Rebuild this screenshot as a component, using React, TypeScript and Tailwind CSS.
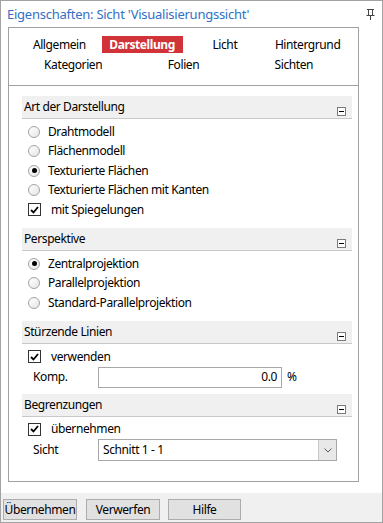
const font = { fontFamily: '"Noto Sans", "Open Sans", sans-serif' };

const Radio = ({ checked, label }: { checked?: boolean; label: string }) => (
  <div className="flex h-[19.5px] items-center pl-[6px]">
    <span className="flex h-[12px] w-[12px] items-center justify-center rounded-full border border-[#a2a2a2] bg-gradient-to-br from-white to-[#e6e6e6]">
      {checked && <span className="h-[5px] w-[5px] rounded-full bg-black" />}
    </span>
    <span className="ml-[8px]">{label}</span>
  </div>
);

const Check = ({ label }: { label: string }) => (
  <div className="flex h-[19.5px] items-center pl-[6px]">
    <span className="flex h-[13px] w-[13px] items-center justify-center border border-[#333] bg-white">
      <svg width="9" height="8" viewBox="0 0 9 8">
        <path d="M1 4 L3.5 6.5 L8 1" fill="none" stroke="#000" strokeWidth="1.8" />
      </svg>
    </span>
    <span className="ml-[10px]">{label}</span>
  </div>
);

const SectionHeader = ({ title }: { title: string }) => (
  <div className="flex h-[23px] items-stretch justify-between border-b border-[#c9c9c9] bg-[#f0f0f0]">
    <span className="flex items-center pl-[2px]">{title}</span>
    <span className="flex items-end pb-[2px] pr-[6px]">
      <span className="flex h-[9px] w-[9px] items-center justify-center border border-[#7a7a7a] bg-white">
        <span className="h-[1px] w-[5px] bg-black" />
      </span>
    </span>
  </div>
);

const PinIcon = () => (
  <svg width="9" height="12" viewBox="0 0 9 12">
    <path d="M1 1.5 H8 M2.5 1.5 V7 M6.5 1.5 V7 M0.5 7.5 H8.5 M4.5 8 V12" fill="none" stroke="#444" strokeWidth="1" />
  </svg>
);

const App = () => {
  return (
    <div
      className="flex h-[523px] w-[383px] flex-col border border-[#a3a3a3] bg-white text-[12px] leading-none tracking-[-0.4px] text-black"
      style={font}
    >
      <div className="flex h-[26px] items-center justify-between pl-[6px] pr-[7px]">
        <span className="text-[13px] tracking-[-0.25px] text-[#3270c4]">Eigenschaften: Sicht 'Visualisierungssicht'</span>
        <PinIcon />
      </div>

      <div className="ml-[7px] flex h-[455px] w-[351px] flex-col border border-[#a0a0a0]">
        <div className="flex h-[58px] flex-col gap-[3px] border-b border-[#a0a0a0] px-[9px] pt-[8px]">
          <div className="grid h-[17px] grid-cols-4 items-center">
            <span className="text-center">Allgemein</span>
            <span className="flex justify-center">
              <span className="flex h-[17px] w-[81px] items-center justify-center bg-[#d13438] font-bold text-white">
                Darstellung
              </span>
            </span>
            <span className="text-center">Licht</span>
            <span className="text-center">Hintergrund</span>
          </div>
          <div className="grid h-[17px] grid-cols-3 items-center">
            <span className="text-center">Kategorien</span>
            <span className="text-center">Folien</span>
            <span className="text-center">Sichten</span>
          </div>
        </div>

        <div className="flex flex-col pl-[13px] pr-[6px] pt-[10px]">
          <SectionHeader title="Art der Darstellung" />
          <div className="pt-[3px] pb-[8.5px]">
            <Radio label="Drahtmodell" />
            <Radio label="Flächenmodell" />
            <Radio checked label="Texturierte Flächen" />
            <Radio label="Texturierte Flächen mit Kanten" />
            <Check label="mit Spiegelungen" />
          </div>

          <SectionHeader title="Perspektive" />
          <div className="pt-[3px] pb-[8.5px]">
            <Radio checked label="Zentralprojektion" />
            <Radio label="Parallelprojektion" />
            <Radio label="Standard-Parallelprojektion" />
          </div>

          <SectionHeader title="Stürzende Linien" />
          <div className="pt-[3px] pb-[6px]">
            <Check label="verwenden" />
            <div className="flex h-[21px] items-center pl-[11px]">
              <span className="w-[65px]">Komp.</span>
              <span className="flex h-[21px] w-[184px] items-center justify-end border border-[#a8a8a8] pr-[4px]">
                0.0
              </span>
              <span className="ml-[5px]">%</span>
            </div>
          </div>

          <SectionHeader title="Begrenzungen" />
          <div className="pt-[3px]">
            <Check label="übernehmen" />
            <div className="flex h-[22px] items-center pl-[11px]">
              <span className="w-[65px]">Sicht</span>
              <span className="flex h-[22px] w-[239px] items-stretch border border-[#a8a8a8]">
                <span className="flex flex-1 items-center pl-[4px]">Schnitt 1 - 1</span>
                <span className="flex w-[18px] items-center justify-center border-l border-[#c8c8c8] bg-[#e8e8e8]">
                  <svg width="8" height="5" viewBox="0 0 8 5">
                    <path d="M0.5 0.5 L4 4 L7.5 0.5" fill="none" stroke="#555" strokeWidth="1" />
                  </svg>
                </span>
              </span>
            </div>
          </div>
        </div>
      </div>

      <div className="mt-[11px] flex h-[29px] items-start gap-[9px] bg-[#f0f0f0] pl-[2px] pt-[6px]">
        <button className="h-[21px] w-[74px] border border-[#adadad] bg-[#e1e1e1]">Übernehmen</button>
        <button className="h-[21px] w-[74px] border border-[#adadad] bg-[#e1e1e1]">Verwerfen</button>
        <button className="-ml-[1px] h-[21px] w-[73px] border border-[#adadad] bg-[#e1e1e1]">Hilfe</button>
      </div>
    </div>
  );
};

export default App;
